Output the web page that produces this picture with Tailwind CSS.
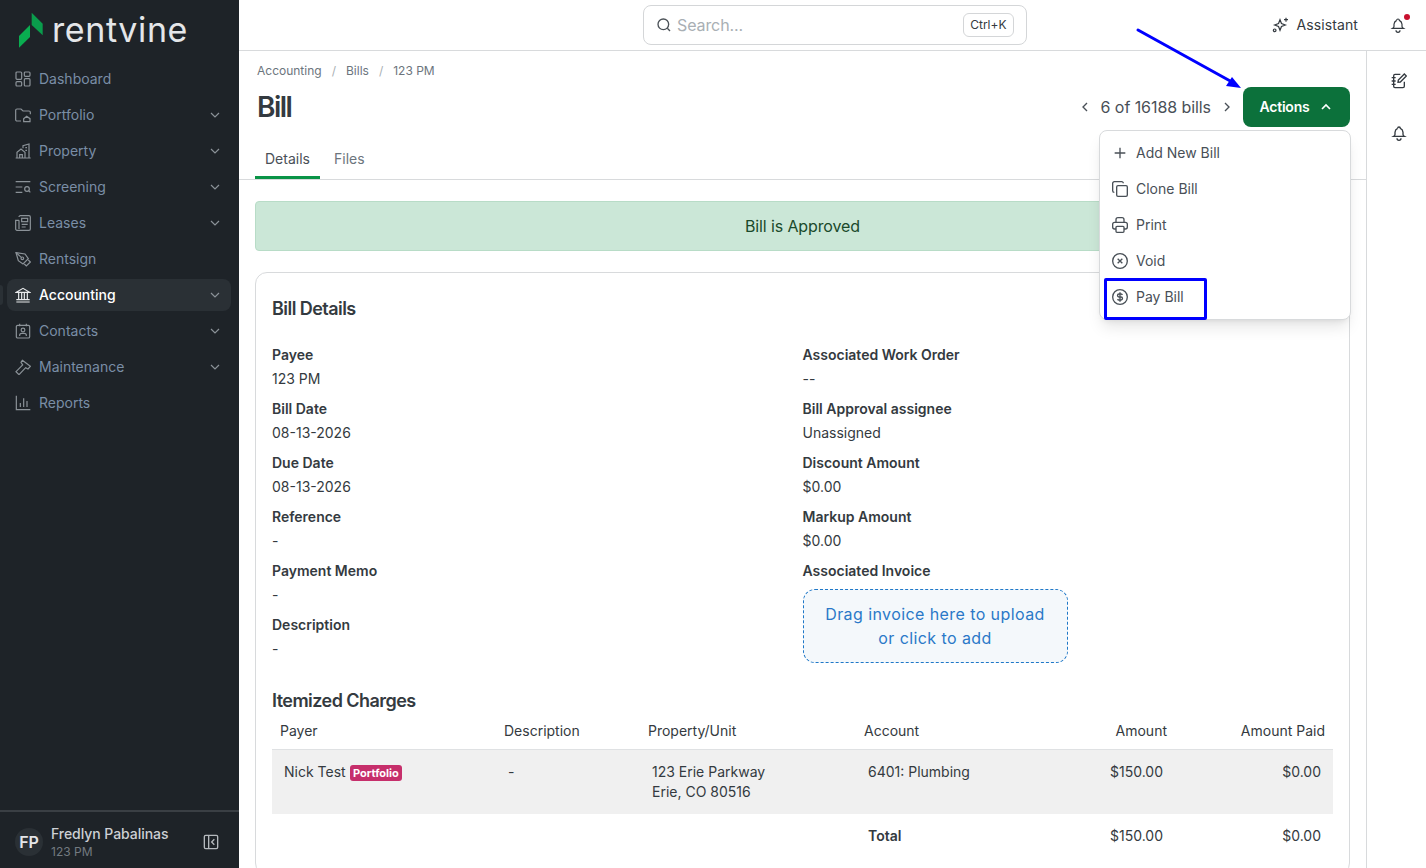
<!DOCTYPE html>
<html>
<head>
<title>Bill</title>
<script src="https://cdn.jsdelivr.net/npm/@tailwindcss/browser@4"></script>
</head>
<body class="h-screen overflow-hidden flex bg-white font-['Inter','Liberation_Sans',sans-serif] text-sm text-[#343a40]">

<!-- sidebar -->
<aside class="w-[239px] h-full shrink-0 bg-[#1e2328] flex flex-col relative">
  <div class="h-[58px] flex items-center pl-[19px] pt-[1px]">
    <svg width="24" height="36" viewBox="0 0 24 36"><path fill="#0a9c4c" d="M12.700 0.700L23.700 11.700V23.300L12.700 13z"/><path fill="#0aad50" d="M11 13V25L0 35.700V24z"/></svg>
    <span class="ml-[9px] text-[34px] leading-none tracking-[0.6px] text-[#e4e6e9]">rentvine</span>
  </div>
  <nav class="flex-1 pl-[7px] pr-[8px] pt-[3px] text-[#7a8ea6]">
    <a class="flex items-center h-9 pl-[8px] pr-[8px] gap-[8px]">
      <svg class="w-4 h-4 text-[#8b9298]" viewBox="0 0 24 24" fill="none" stroke="currentColor" stroke-width="1.800"><rect x="1.500" y="1.500" width="8.500" height="11" rx="1.500"/><rect x="1.500" y="16" width="8.500" height="6.500" rx="1.500"/><rect x="14" y="1.500" width="8.500" height="6.500" rx="1.500"/><rect x="14" y="11.500" width="8.500" height="11" rx="1.500"/></svg>
      <span>Dashboard</span>
    </a>
    <a class="flex items-center h-9 pl-[8px] pr-[8px] gap-[8px]">
      <svg class="w-4 h-4 text-[#8b9298]" viewBox="0 0 24 24" fill="none" stroke="currentColor" stroke-width="1.800"><path d="M9 21H3a2 2 0 0 1-2-2V5a2 2 0 0 1 2-2h6l3 3h9a2 2 0 0 1 2 2v3"/><path d="M13 17.500l4.500-3.500 5 3.500V22H13z"/></svg>
      <span>Portfolio</span>
      <svg class="ml-auto w-4 h-4 text-[#8b9298]" viewBox="0 0 24 24" fill="none" stroke="currentColor" stroke-width="1.800"><path d="M6 9l6 6 6-6"/></svg>
    </a>
    <a class="flex items-center h-9 pl-[8px] pr-[8px] gap-[8px]">
      <svg class="w-4 h-4 text-[#8b9298]" viewBox="0 0 24 24" fill="none" stroke="currentColor" stroke-width="1.800"><path d="M1 22.500h22.500M3 22.500V14l6-5 6 5v8.500M7 22.500v-5h4v5M12 8V4l9-2.500v21M15.500 7h2.500M15.500 11h2.500M18 15h0"/></svg>
      <span>Property</span>
      <svg class="ml-auto w-4 h-4 text-[#8b9298]" viewBox="0 0 24 24" fill="none" stroke="currentColor" stroke-width="1.800"><path d="M6 9l6 6 6-6"/></svg>
    </a>
    <a class="flex items-center h-9 pl-[8px] pr-[8px] gap-[8px]">
      <svg class="w-4 h-4 text-[#8b9298]" viewBox="0 0 24 24" fill="none" stroke="currentColor" stroke-width="1.800"><path d="M1 4h22M1 12h10M1 20h10"/><circle cx="18" cy="15" r="3.500"/><path d="M20.500 17.500L23 20"/></svg>
      <span>Screening</span>
      <svg class="ml-auto w-4 h-4 text-[#8b9298]" viewBox="0 0 24 24" fill="none" stroke="currentColor" stroke-width="1.800"><path d="M6 9l6 6 6-6"/></svg>
    </a>
    <a class="flex items-center h-9 pl-[8px] pr-[8px] gap-[8px]">
      <svg class="w-4 h-4 text-[#8b9298]" viewBox="0 0 24 24" fill="none" stroke="currentColor" stroke-width="1.800"><path d="M6 3a2 2 0 0 1 2-2h13a2 2 0 0 1 2 2v18a2 2 0 0 1-2 2H3a2 2 0 0 1-2-2V8h5"/><path d="M6 8v13"/><rect x="10" y="5" width="9" height="5"/><path d="M10 14h9M10 18h6"/></svg>
      <span>Leases</span>
      <svg class="ml-auto w-4 h-4 text-[#8b9298]" viewBox="0 0 24 24" fill="none" stroke="currentColor" stroke-width="1.800"><path d="M6 9l6 6 6-6"/></svg>
    </a>
    <a class="flex items-center h-9 pl-[8px] pr-[8px] gap-[8px]">
      <svg class="w-4 h-4 text-[#8b9298]" viewBox="0 0 24 24" fill="none" stroke="currentColor" stroke-width="1.800"><path d="M1.500 2.500l13.500 2 5 7-8 8-7-5z"/><circle cx="11" cy="11" r="2"/><path d="M1.500 2.500l8 7M20 13.500l3 3-6 6-3-3"/></svg>
      <span>Rentsign</span>
    </a>
    <a class="flex items-center h-8 my-[2px] pl-[8px] pr-[8px] gap-[8px] rounded-lg bg-[#2a3035] text-white font-medium">
      <svg class="w-4 h-4 text-[#e8eaec]" viewBox="0 0 24 24" fill="none" stroke="currentColor" stroke-width="1.800"><path d="M2 8l10-6 10 6zM2 22.500h20M2 19h20M5.500 8v11M10 8v11M14 8v11M18.500 8v11"/></svg>
      <span>Accounting</span>
      <svg class="ml-auto w-4 h-4 text-[#8b9298]" viewBox="0 0 24 24" fill="none" stroke="currentColor" stroke-width="1.800"><path d="M6 9l6 6 6-6"/></svg>
    </a>
    <a class="flex items-center h-9 pl-[8px] pr-[8px] gap-[8px]">
      <svg class="w-4 h-4 text-[#8b9298]" viewBox="0 0 24 24" fill="none" stroke="currentColor" stroke-width="1.800"><rect x="2" y="3.500" width="20" height="19" rx="2"/><path d="M7 1v4M17 1v4M7 19.500v-1a3 3 0 0 1 3-3h4a3 3 0 0 1 3 3v1"/><circle cx="12" cy="10.500" r="2.800"/></svg>
      <span>Contacts</span>
      <svg class="ml-auto w-4 h-4 text-[#8b9298]" viewBox="0 0 24 24" fill="none" stroke="currentColor" stroke-width="1.800"><path d="M6 9l6 6 6-6"/></svg>
    </a>
    <a class="flex items-center h-9 pl-[8px] pr-[8px] gap-[8px]">
      <svg class="w-4 h-4 text-[#8b9298]" viewBox="0 0 24 24" fill="none" stroke="currentColor" stroke-width="1.800"><path d="M11 2l12 9-3.500 4-3.500-2L6 23.500 1.500 19 11.500 9 9 5z"/></svg>
      <span>Maintenance</span>
      <svg class="ml-auto w-4 h-4 text-[#8b9298]" viewBox="0 0 24 24" fill="none" stroke="currentColor" stroke-width="1.800"><path d="M6 9l6 6 6-6"/></svg>
    </a>
    <a class="flex items-center h-9 pl-[8px] pr-[8px] gap-[8px]">
      <svg class="w-4 h-4 text-[#8b9298]" viewBox="0 0 24 24" fill="none" stroke="currentColor" stroke-width="1.800"><path d="M2 1v21h21M8 18v-6M13 18V5M18 18V9"/></svg>
      <span>Reports</span>
    </a>
  </nav>
  <div class="h-[58px] border-t-2 border-[#3a3f44] flex items-center pl-[15px] pr-[20px] pt-[4px]">
    <div class="w-7 h-7 rounded-full bg-[#2a3035] flex items-center justify-center text-base font-semibold text-[#e4e6e9]">FP</div>
    <div class="ml-[8px] mt-[2px] flex-1">
      <div class="text-sm leading-[18px] font-medium tracking-[-0.05px] text-[#cdd0d4]">Fredlyn Pabalinas</div>
      <div class="text-xs leading-[18px] text-[#737a80]">123 PM</div>
    </div>
    <svg class="w-4 h-4 text-[#b5b9bd]" viewBox="0 0 24 24" fill="none" stroke="currentColor" stroke-width="2"><rect x="2" y="2" width="20" height="20" rx="2"/><path d="M8.500 2v20M17 8l-4 4 4 4"/></svg>
  </div>
  <div class="absolute left-0 top-[285px] w-[3px] h-5 rounded-r bg-[#2a3035]"></div>
</aside>

<div class="flex-1 min-w-0 flex flex-col">
  <!-- topbar -->
  <header class="h-[51px] shrink-0 border-b border-[#d8dadc] relative flex items-center justify-end pr-[20px]">
    <div class="absolute left-[404px] top-[5px] w-[384px] h-10 rounded-lg border border-[#d4d6d8] flex items-center pl-[12px] pr-[12px]">
      <svg class="w-4 h-4 text-[#4b5157]" viewBox="0 0 24 24" fill="none" stroke="currentColor" stroke-width="2"><circle cx="11" cy="11" r="8"/><path d="M17 17l4 4"/></svg>
      <span class="ml-[5px] text-base tracking-[-0.1px] text-[#a9afb4]">Search...</span>
      <span class="ml-auto h-6 px-[6.500px] border border-[#d4d6d8] rounded-md text-xs leading-[22px] text-[#343a40]">Ctrl+K</span>
    </div>
    <svg class="w-4 h-4 text-[#343a40]" viewBox="0 0 24 24" fill="none" stroke="currentColor" stroke-width="1.800"><path d="M12 4l2.200 5.800 5.800 2.200-5.800 2.200-2.200 5.800-2.200-5.800-5.800-2.200 5.800-2.200z"/><path d="M21 1v6M18 4h6"/><circle cx="4" cy="20" r="2"/></svg>
    <span class="ml-[9px] tracking-[0.1px] text-[#343a40]">Assistant</span>
    <div class="ml-[32px] relative w-4 h-4">
      <svg class="w-4 h-4 text-[#343a40]" viewBox="0 0 24 24" fill="none" stroke="currentColor" stroke-width="1.800"><path d="M10 5a2 2 0 1 1 4 0 7 7 0 0 1 4 6v3a4 4 0 0 0 2 3H4a4 4 0 0 0 2-3v-3a7 7 0 0 1 4-6"/><path d="M9 20a3 3 0 0 0 6 0"/></svg>
      <span class="absolute -top-[3px] -right-[4px] w-[6px] h-[6px] rounded-full bg-[#c8102e]"></span>
    </div>
  </header>

  <div class="flex-1 min-h-0 flex">
    <main class="flex-1 min-w-0 overflow-hidden relative">
      <div class="h-[129px] border-b border-[#d8dadc] px-4 relative">
        <div class="pt-[12px] pl-[2px] flex items-center text-xs leading-4 text-[#6c757d]">
          <span>Accounting</span><span class="mx-[10px] text-[#a9afb4]">/</span><span>Bills</span><span class="mx-[10px] text-[#a9afb4]">/</span><span>123 PM</span>
        </div>
        <div class="mt-[8px] h-10 flex items-center">
          <h1 class="pl-[2px] text-[28px] font-semibold tracking-[-1.500px] text-[#343a40]">Bill</h1>
          <div class="ml-auto flex items-center text-base text-[#495057]">
            <svg class="w-4 h-4" viewBox="0 0 24 24" fill="none" stroke="currentColor" stroke-width="2"><path d="M15 6l-6 6 6 6"/></svg>
            <span class="mx-2 tracking-[-0.07px]">6 of 16188 bills</span>
            <svg class="w-4 h-4" viewBox="0 0 24 24" fill="none" stroke="currentColor" stroke-width="2"><path d="M9 6l6 6-6 6"/></svg>
            <button class="ml-[8px] w-[107px] h-10 rounded-lg bg-[#0c713b] text-white text-sm font-semibold tracking-[-0.2px] flex items-center justify-center gap-[8px]">
              Actions
              <svg class="w-4 h-4" viewBox="0 0 24 24" fill="none" stroke="currentColor" stroke-width="2.500"><path d="M6 15l6-6 6 6"/></svg>
            </button>
          </div>
        </div>
        <div class="absolute left-4 bottom-0 flex">
          <span class="w-[65px] h-[36px] pb-[1px] flex items-center justify-center border-b-[3px] border-[#0a9447] text-[#495057]">Details</span>
          <span class="ml-[14px] h-[36px] pb-[4px] flex items-center text-[#6c757d]">Files</span>
        </div>
      </div>

      <div class="px-4 pt-[21px]">
        <div class="h-[50px] bg-[#cbe7d7] border border-[#b8dcc7] rounded-sm flex items-center justify-center text-base tracking-[-0.12px] text-[#1a4a2b]">Bill is Approved</div>

        <section class="mt-[21px] border border-[#d8dadc] rounded-xl px-4 pt-[22px] pb-4">
          <h2 class="text-lg font-semibold leading-7 tracking-[-0.55px]">Bill Details</h2>
          <div class="mt-[20px] grid grid-cols-2 gap-x-0 gap-y-[6px] leading-6">
            <div><div class="font-semibold">Payee</div><div>123 PM</div></div>
            <div><div class="font-semibold">Associated Work Order</div><div>--</div></div>
            <div><div class="font-semibold">Bill Date</div><div>08-13-2026</div></div>
            <div><div class="font-semibold">Bill Approval assignee</div><div>Unassigned</div></div>
            <div><div class="font-semibold">Due Date</div><div>08-13-2026</div></div>
            <div><div class="font-semibold">Discount Amount</div><div>$0.00</div></div>
            <div><div class="font-semibold">Reference</div><div>-</div></div>
            <div><div class="font-semibold">Markup Amount</div><div>$0.00</div></div>
            <div><div class="font-semibold">Payment Memo</div><div>-</div></div>
            <div class="row-span-2">
              <div class="font-semibold">Associated Invoice</div>
              <div class="mt-[6px] -mb-[2px] w-[265px] h-[74px] rounded-xl border border-dashed border-[#1f78c8] bg-[#f4f8fb] flex items-center justify-center text-center text-base tracking-[0.42px] text-[#2a78c8]">Drag invoice here to upload<br>or click to add</div>
            </div>
            <div><div class="font-semibold">Description</div><div>-</div></div>
          </div>

          <h2 class="mt-[28px] text-lg font-semibold leading-6 tracking-[-0.55px]">Itemized Charges</h2>
          <table class="mt-[1px] w-full table-fixed text-sm">
            <colgroup><col class="w-[224px]"><col class="w-[144px]"><col class="w-[216px]"><col class="w-[164px]"><col class="w-[155px]"><col class="w-[158px]"></colgroup>
            <thead>
              <tr class="h-[35px] border-b border-[#dfe1e3] text-left font-normal">
                <th class="px-2 font-normal">Payer</th><th class="px-2 font-normal">Description</th><th class="px-2 font-normal">Property/Unit</th><th class="px-2 font-normal">Account</th><th class="px-2 font-normal text-right">Amount</th><th class="px-2 font-normal text-right">Amount Paid</th>
              </tr>
            </thead>
            <tbody>
              <tr class="h-[64px] bg-[#f0f0f0] align-top">
                <td class="px-3 py-3 leading-5">Nick Test <span class="inline-block h-4 px-[3.500px] rounded-[3px] bg-[#c62f6b] text-white text-[11px] leading-4 font-bold">Portfolio</span></td>
                <td class="px-3 py-3 leading-5">-</td>
                <td class="px-3 py-3 leading-5">123 Erie Parkway<br>Erie, CO 80516</td>
                <td class="px-3 py-3 leading-5">6401: Plumbing</td>
                <td class="px-3 py-3 leading-5 text-right">$150.00</td>
                <td class="px-3 py-3 leading-5 text-right">$0.00</td>
              </tr>
              <tr class="h-[44px]">
                <td></td><td></td><td></td>
                <td class="px-3 font-semibold">Total</td>
                <td class="px-3 text-right">$150.00</td>
                <td class="px-3 text-right">$0.00</td>
              </tr>
            </tbody>
          </table>
        </section>
      </div>

      <!-- actions dropdown -->
      <div class="absolute left-[860px] top-[79px] w-[252px] h-[190px] bg-white border border-[#d8dadc] rounded-lg shadow-lg pt-[4px] pl-[12px] text-[#495057]">
        <div class="h-9 flex items-center gap-2"><svg class="w-4 h-4" viewBox="0 0 24 24" fill="none" stroke="currentColor" stroke-width="2"><path d="M12 4v16M4 12h16"/></svg>Add New Bill</div>
        <div class="h-9 flex items-center gap-2"><svg class="w-4 h-4" viewBox="0 0 24 24" fill="none" stroke="currentColor" stroke-width="2"><rect x="7" y="7" width="16" height="16" rx="2"/><path d="M3.500 17A2.500 2.500 0 0 1 1 14.500V3.500A2.500 2.500 0 0 1 3.500 1h11A2.500 2.500 0 0 1 17 3.500"/></svg>Clone Bill</div>
        <div class="h-9 flex items-center gap-2"><svg class="w-4 h-4" viewBox="0 0 24 24" fill="none" stroke="currentColor" stroke-width="2"><path d="M6 18H4a3 3 0 0 1-3-3v-4a3 3 0 0 1 3-3h16a3 3 0 0 1 3 3v4a3 3 0 0 1-3 3h-2"/><path d="M18 8V4a3 3 0 0 0-3-3H9a3 3 0 0 0-3 3v4"/><rect x="6" y="14" width="12" height="9" rx="1.500"/></svg>Print</div>
        <div class="h-9 flex items-center gap-2"><svg class="w-4 h-4" viewBox="0 0 24 24" fill="none" stroke="currentColor" stroke-width="2"><circle cx="12" cy="12" r="11"/><path d="M8.500 8.500l7 7M15.500 8.500l-7 7"/></svg>Void</div>
        <div class="h-9 flex items-center gap-2"><svg class="w-4 h-4" viewBox="0 0 24 24" fill="none" stroke="currentColor" stroke-width="2"><circle cx="12" cy="12" r="11"/><path d="M15.500 9a2 2 0 0 0-2-1.500h-3a2.200 2.200 0 0 0 0 4.500h3a2.200 2.200 0 0 1 0 4.500h-3a2 2 0 0 1-2-1.500M12 5v14"/></svg>Pay Bill</div>
      </div>
    </main>

    <!-- right rail -->
    <aside class="w-[60px] shrink-0 border-l border-[#d8dadc] flex flex-col items-center pl-[5px] pt-[22px] gap-[36px] text-[#343a40]">
      <svg class="w-4 h-4" viewBox="0 0 24 24" fill="none" stroke="currentColor" stroke-width="2"><path d="M14 2H6a2 2 0 0 0-2 2v16a2 2 0 0 0 2 2h12a2 2 0 0 0 2-2v-7"/><path d="M1 7h6M1 12h6M1 17h6"/><path d="M20 1.500l3 3-9 9-3.500.500.500-3.500z"/></svg>
      <svg class="w-4 h-4" viewBox="0 0 24 24" fill="none" stroke="currentColor" stroke-width="2"><path d="M10 5a2 2 0 1 1 4 0 7 7 0 0 1 4 6v3a4 4 0 0 0 2 3H4a4 4 0 0 0 2-3v-3a7 7 0 0 1 4-6"/><path d="M9 20a3 3 0 0 0 6 0"/></svg>
    </aside>
  </div>
</div>

<!-- screenshot annotations -->
<div class="absolute left-[1104px] top-[278px] w-[103px] h-[42px] border-[3px] border-[#0000ff] rounded-[2px]"></div>
<svg class="absolute left-0 top-0 pointer-events-none" width="1426" height="868"><path d="M1138 30L1232 82" stroke="#0000ff" stroke-width="3" stroke-linecap="round"/><path d="M1241 88L1226 86 1232 77z" fill="#0000ff"/></svg>
</body>
</html>
